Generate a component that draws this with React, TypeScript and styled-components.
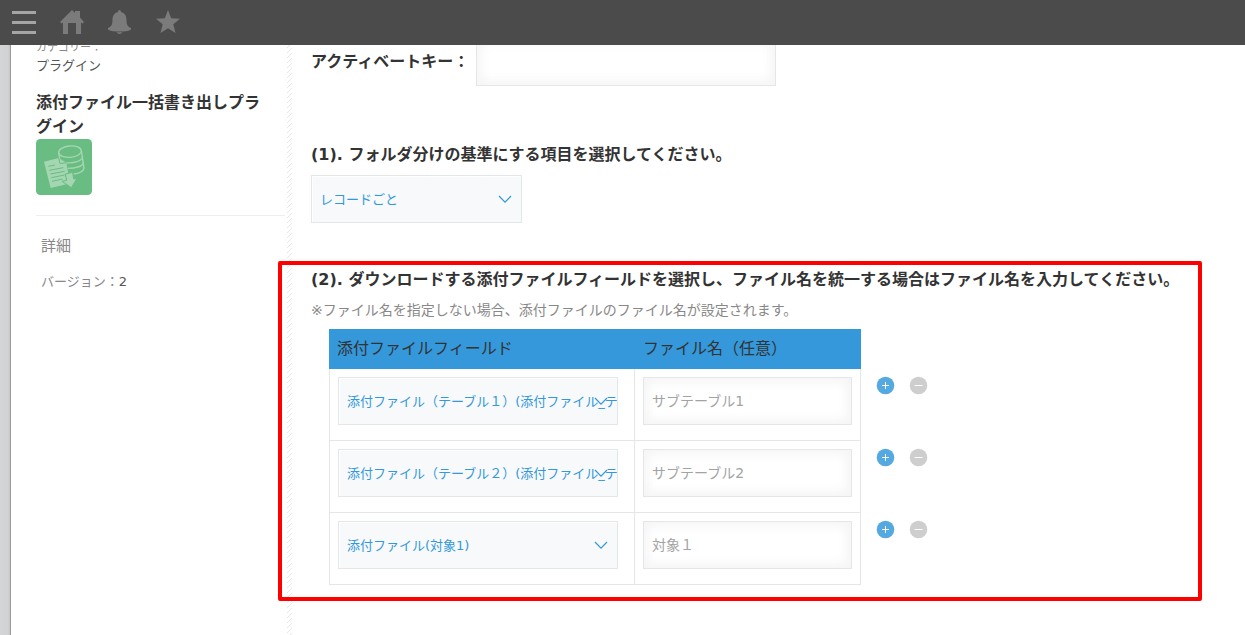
import React from 'react';
import styled, { createGlobalStyle } from 'styled-components';

const GlobalStyle = createGlobalStyle`
  *, *::before, *::after { box-sizing: border-box; }
  body {
    margin: 0;
    overflow: hidden;
    background: #fff;
    color: #333;
    font-family: "DejaVu Sans", "Noto Sans CJK JP", sans-serif;
    font-size: 14px;
  }
  h1, h2, p { margin: 0; }
  button, input, select { font-family: inherit; }
`;

const Header = styled.header`
  position: fixed;
  inset: 0 0 auto 0;
  z-index: 10;
  height: 45px;
  padding: 10px 12px;
  display: flex;
  align-items: flex-start;
  gap: 24px;
  background: #4b4b4b;
`;

const HeaderButton = styled.button<{ $bright?: boolean }>`
  width: 24px;
  height: 24px;
  padding: 0;
  border: 0;
  background: none;
  color: ${(p) => (p.$bright ? '#a5a5a5' : '#7b7b7b')};
  svg { display: block; }
`;

const Page = styled.div`
  display: flex;
  height: 100vh;
  padding-top: 38px;
`;

const Gutter = styled.div`
  flex: none;
  width: 11px;
  background: linear-gradient(90deg, #d3d5d7 0, #d0d2d4 8px, #c4c6c8 10px, #999b9d 10px);
`;

const Sidebar = styled.aside`
  flex: none;
  width: 276px;
  padding: 1px 2px 0 25px;
`;

const Category = styled.p`
  font-size: 11px;
  line-height: 18px;
  color: #888;
`;

const CategoryName = styled.p`
  font-size: 13px;
  line-height: 18px;
  color: #555;
`;

const PluginName = styled.h1`
  margin-top: 16px;
  padding-right: 16px;
  font-size: 16px;
  line-height: 24px;
  font-weight: 700;
`;

const PluginIcon = styled.svg`
  display: block;
`;

const Details = styled.section`
  margin-top: 20px;
  padding: 20px 5px;
  border-top: 1px solid #eee;
  color: #888;
`;

const DetailsTitle = styled.h2`
  font-size: 15px;
  line-height: 20px;
  font-weight: 400;
`;

const Version = styled.p`
  margin-top: 16px;
  font-size: 13px;
  line-height: 20px;
  span { color: #555; }
`;

const Stripes = styled.div`
  flex: none;
  width: 5px;
  background: linear-gradient(135deg, transparent 42%, #e8e8e8 42%, #e8e8e8 58%, transparent 58%) 0 0 / 5px 5px;
`;

const Main = styled.main`
  flex: 1;
  min-width: 0;
  padding: 0 43px 0 19px;
`;

const KeyRow = styled.div`
  display: flex;
  align-items: center;
  label {
    width: 165px;
    font-size: 16px;
    line-height: 24px;
    font-weight: 700;
    white-space: nowrap;
  }
`;

const TextInput = styled.input<{ $width: string }>`
  display: block;
  width: ${(p) => p.$width};
  height: 48px;
  padding: 0 8px 2px;
  border: 1px solid #e3e7e8;
  border-radius: 0;
  background: #fff;
  box-shadow: inset 4px 4px 12px #f5f5f5, inset -4px -4px 12px #f5f5f5;
  color: #a3a3a3;
  font-size: 14px;
  outline: none;
`;

const Section = styled.section<{ $gap: number }>`
  position: relative;
  margin-top: ${(p) => p.$gap}px;
`;

const SectionTitle = styled.h2`
  font-size: 16px;
  line-height: 24px;
  font-weight: 700;
  white-space: nowrap;
`;

const Highlight = styled.div`
  position: absolute;
  inset: -7px 0 -16px -33px;
  border: 4px solid #f00;
  border-radius: 2px;
  pointer-events: none;
`;

const Note = styled.p`
  margin: 8px 0 9px;
  font-size: 14px;
  line-height: 20px;
  color: #888;
`;

const SelectBox = styled.div<{ $width: string; $top?: number }>`
  position: relative;
  width: ${(p) => p.$width};
  margin-top: ${(p) => p.$top ?? 0}px;
  svg {
    position: absolute;
    right: 10px;
    top: 20px;
    pointer-events: none;
  }
`;

const Select = styled.select`
  appearance: none;
  display: block;
  width: 100%;
  height: 48px;
  padding: 0 0 0 8px;
  border: 1px solid #e3e7e8;
  border-radius: 0;
  background: #f7f9fa;
  box-shadow: inset 1px 1px 0 #fff;
  color: #3498db;
  font-size: 13px;
  outline: none;
`;

const FieldTable = styled.table`
  margin-left: 18px;
  table-layout: fixed;
  width: 620px;
  border-spacing: 0;
`;

const HeadCell = styled.th`
  height: 40px;
  padding: 0 8px;
  background: #3498db;
  font-size: 16px;
  line-height: 24px;
  font-weight: 400;
  text-align: left;
`;

const Cell = styled.td`
  height: 72px;
  padding: 8px;
  border: solid #e3e7e8;
  border-width: 0 1px 1px 0;
  vertical-align: top;
  &:first-child { border-left-width: 1px; }
`;

const ActionCell = styled.td`
  padding: 7px 0 0 15px;
  vertical-align: top;
`;

const Actions = styled.div`
  display: flex;
  gap: 14px;
`;

const RoundButton = styled.button`
  width: 19px;
  height: 19px;
  padding: 0;
  border: 0;
  background: none;
  svg { display: block; }
`;

function Dropdown({ label, options, width, top }: { label: string; options: string[]; width: string; top?: number }) {
  return (
    <SelectBox $width={width} $top={top}>
      <Select aria-label={label}>
        {options.map((o) => (
          <option key={o}>{o}</option>
        ))}
      </Select>
      <svg width="14" height="9" viewBox="0 0 14 9" fill="none" stroke="#3498db" strokeWidth="1.2" aria-hidden="true">
        <path d="M1 1 L7 7.2 L13 1" />
      </svg>
    </SelectBox>
  );
}

function PluginLogo() {
  return (
    <PluginIcon width="56" height="56" viewBox="0 0 168 168" aria-label="プラグインアイコン">
      <rect width="168" height="168" rx="13" fill="#69bd83" />
      <g fill="none" stroke="#a5d6b2" strokeWidth="4">
        <ellipse cx="102" cy="38" rx="34" ry="17" transform="rotate(-5 102 38)" />
        <path d="M68 42 L71 60 M136 34 L144 88 C142 98 130 103 112 105" />
        <path d="M88 71 C114 74 138 66 139 54" />
        <path d="M95 88 C122 88 141 81 142 71" />
      </g>
      <path d="M24 68 L68 57 L91 71 L97 105 L88 107 L94 135 L44 147 Z" fill="#a5d6b2" />
      <path d="M68 57 L72 74 L91 71" fill="none" stroke="#69bd83" strokeWidth="3" />
      <path
        d="M37 82 L57 78 M40 94 L82 86 M43 105 L86 97 M46 116 L86 108 M48 127 L80 120"
        stroke="#69bd83"
        strokeWidth="3"
      />
      <path d="M88 105 L110 100 L113 120 L123 118 L106 146 L78 127 L92 124 Z" fill="#a5d6b2" stroke="#69bd83" strokeWidth="3" />
    </PluginIcon>
  );
}

const rows = [
  { field: '添付ファイル（テーブル１）(添付ファイル_テーブル１)', name: 'サブテーブル1' },
  { field: '添付ファイル（テーブル２）(添付ファイル_テーブル２)', name: 'サブテーブル2' },
  { field: '添付ファイル(対象1)', name: '対象１' },
];

export default function App() {
  return (
    <>
      <GlobalStyle />
      <Header>
        <HeaderButton $bright aria-label="メニュー">
          <svg width="24" height="24" fill="currentColor">
            <path d="M0 1h24v3H0zM0 11h24v3H0zM0 21h24v3H0z" />
          </svg>
        </HeaderButton>
        <HeaderButton aria-label="ホーム">
          <svg width="24" height="24" fill="currentColor">
            <path d="M0 12 L12 0 L15 3 V1 H20 V7.5 L24 12 L22.5 13.5 L21 12.5 V24 H16 V13 H8 V24 H3 V12.5 L1.5 13.5 Z" />
          </svg>
        </HeaderButton>
        <HeaderButton aria-label="通知">
          <svg width="24" height="24" fill="currentColor">
            <path d="M10 2 Q10 0 11.5 0 Q13 0 13 2 C17 3 18.500 6 18.500 10 C18.500 15 20 17 23 18 V19.500 C20 21.500 16 21.500 11.500 21.500 C7 21.500 3 21.500 0 19.500 V18 C3 17 4.500 15 4.500 10 C4.500 6 6 3 10 2 Z M8.500 22.300 H14.500 Q13.500 24 11.500 24 Q9.500 24 8.500 22.300 Z" />
          </svg>
        </HeaderButton>
        <HeaderButton aria-label="お気に入り">
          <svg width="24" height="24" fill="currentColor">
            <path d="M12 0 L15.200 8.300 L24 8.700 L17.300 14.200 L19.500 23 L12 18.300 L4.500 23 L6.700 14.200 L0 8.700 L8.800 8.300 Z" />
          </svg>
        </HeaderButton>
      </Header>
      <Page>
        <Gutter />
        <Sidebar>
          <Category>カテゴリー：</Category>
          <CategoryName>プラグイン</CategoryName>
          <PluginName>添付ファイル一括書き出しプラグイン</PluginName>
          <PluginLogo />
          <Details>
            <DetailsTitle>詳細</DetailsTitle>
            <Version>
              バージョン：<span>2</span>
            </Version>
          </Details>
        </Sidebar>
        <Stripes />
        <Main>
          <KeyRow>
            <label htmlFor="activate-key">アクティベートキー：</label>
            <TextInput id="activate-key" $width="300px" />
          </KeyRow>
          <Section $gap={57}>
            <SectionTitle>(1). フォルダ分けの基準にする項目を選択してください。</SectionTitle>
            <Dropdown label="フォルダ分けの基準" options={['レコードごと']} width="211px" top={8} />
          </Section>
          <Section $gap={45}>
            <SectionTitle>
              (2). ダウンロードする添付ファイルフィールドを選択し、ファイル名を統一する場合はファイル名を入力してください。
            </SectionTitle>
            <Note>※ファイル名を指定しない場合、添付ファイルのファイル名が設定されます。</Note>
            <FieldTable>
              <colgroup>
                <col width="306" />
                <col width="226" />
                <col width="88" />
              </colgroup>
              <thead>
                <tr>
                  <HeadCell>添付ファイルフィールド</HeadCell>
                  <HeadCell>ファイル名（任意）</HeadCell>
                </tr>
              </thead>
              <tbody>
                {rows.map((r) => (
                  <tr key={r.name}>
                    <Cell>
                      <Dropdown label="添付ファイルフィールド" options={[r.field]} width="280px" />
                    </Cell>
                    <Cell>
                      <TextInput aria-label="ファイル名" defaultValue={r.name} $width="100%" />
                    </Cell>
                    <ActionCell>
                      <Actions>
                        <RoundButton aria-label="行を追加">
                          <svg width="19" height="19">
                            <circle cx="9.500" cy="9.500" r="8.800" fill="#55a9e1" />
                            <path d="M6 9.500h7M9.500 6v7" stroke="#fff" />
                          </svg>
                        </RoundButton>
                        <RoundButton aria-label="行を削除">
                          <svg width="19" height="19">
                            <circle cx="9.500" cy="9.500" r="8.800" fill="#cecece" />
                            <path d="M5.500 9.500h8" stroke="#fff" />
                          </svg>
                        </RoundButton>
                      </Actions>
                    </ActionCell>
                  </tr>
                ))}
              </tbody>
            </FieldTable>
            <Highlight />
          </Section>
        </Main>
      </Page>
    </>
  );
}
